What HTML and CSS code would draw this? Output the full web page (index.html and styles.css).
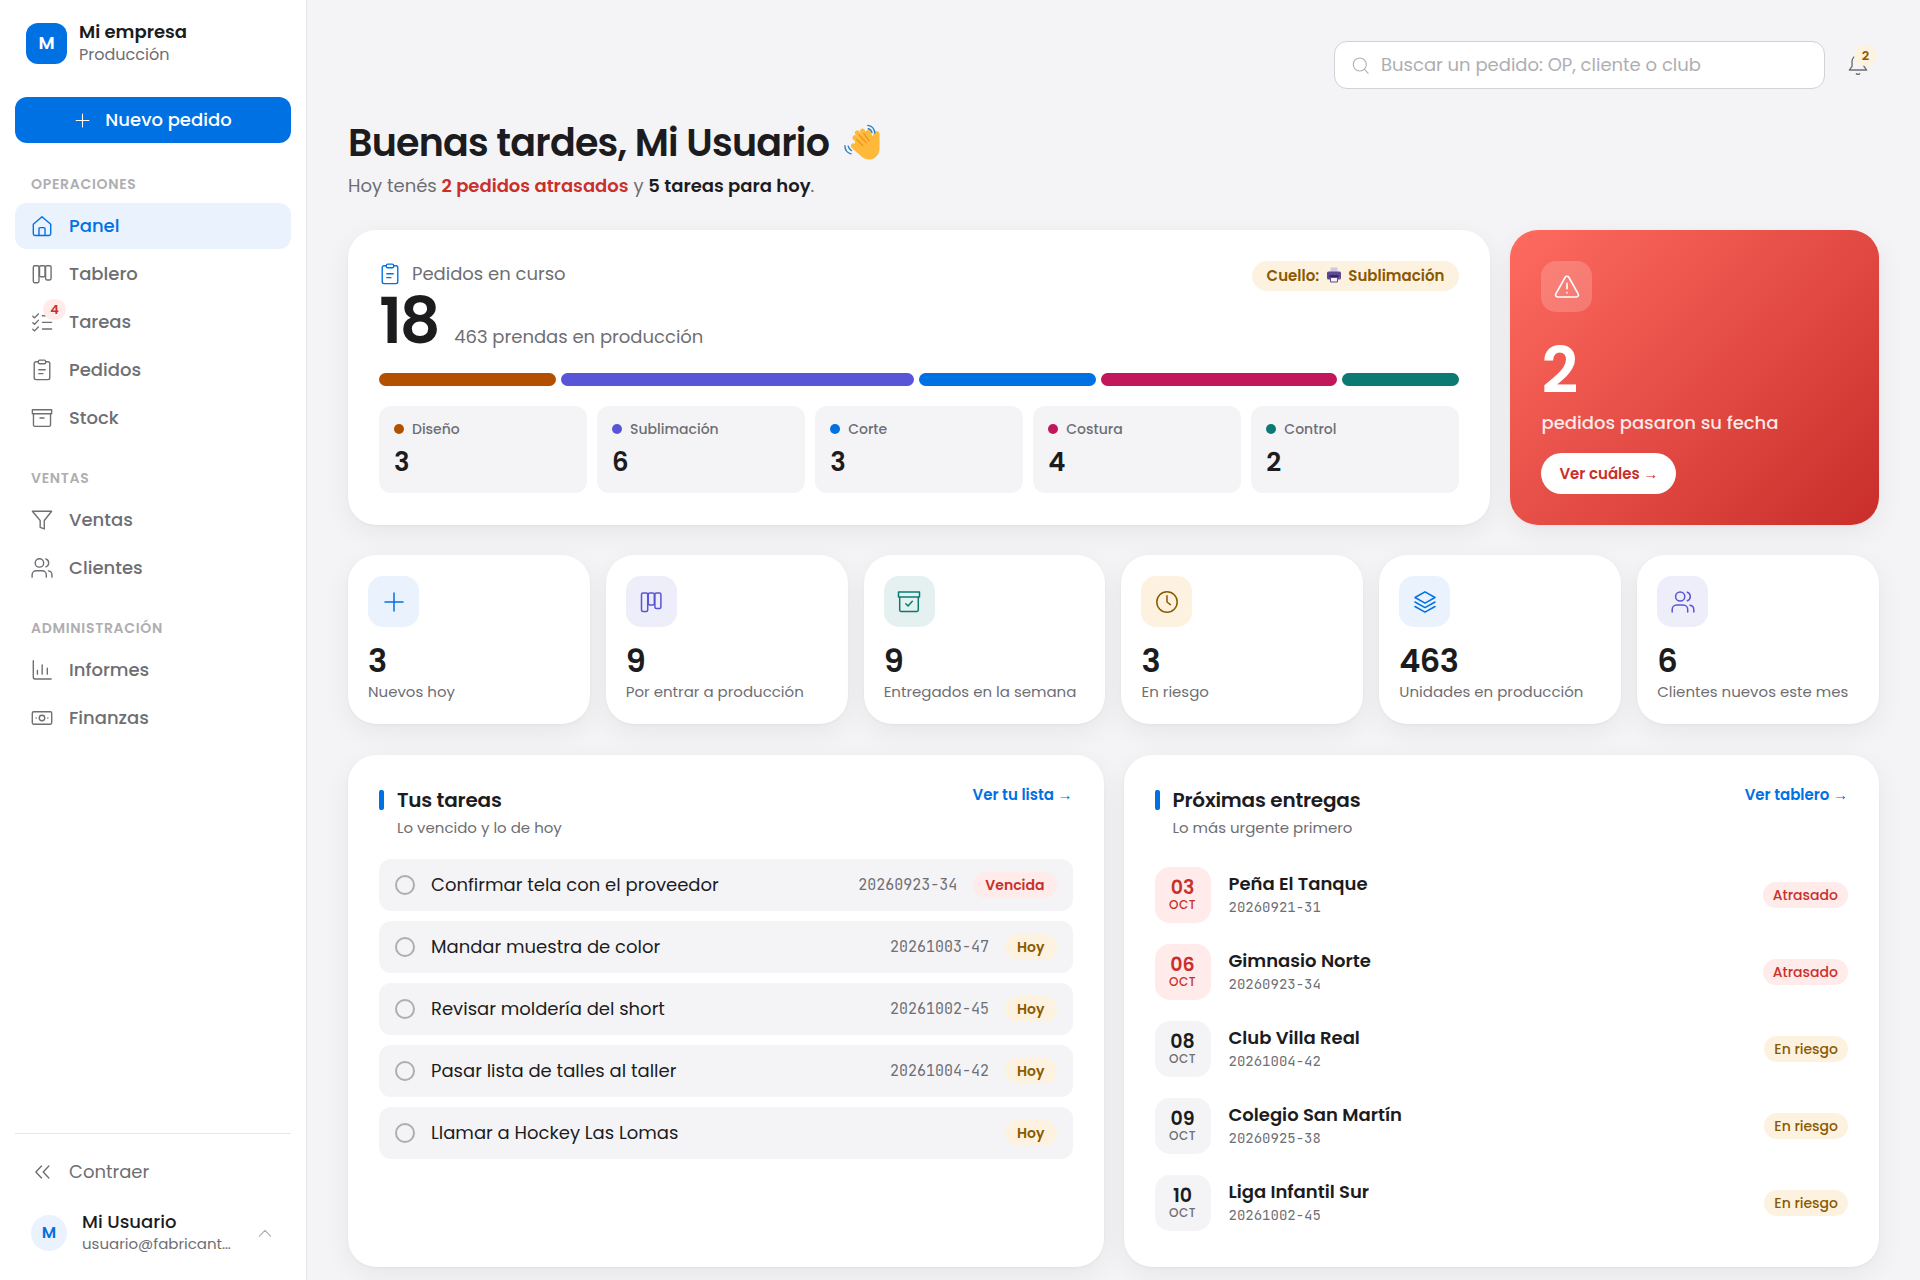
FILE: index.html
```html
<!DOCTYPE html>
<html lang="es">
<head>
<meta charset="utf-8">
<meta name="viewport" content="width=device-width, initial-scale=1">
<title>Panel · Mi empresa</title>
<link rel="stylesheet" href="styles.css">
</head>
<body>
<svg class="sprite" aria-hidden="true">
  <symbol id="i-home" viewBox="0 0 24 24"><path d="M2.500 10.200 12 1.800l9.500 8.400v10.300a1.800 1.800 0 0 1-1.800 1.800H4.300a1.800 1.800 0 0 1-1.800-1.800zM8.700 22.300v-7.300a1.200 1.200 0 0 1 1.200-1.200h4.200a1.200 1.200 0 0 1 1.200 1.200v7.300"/></symbol>
  <symbol id="i-board" viewBox="0 0 24 24"><rect x="2.500" y="3" width="6.200" height="18.500" rx="1.500"/><rect x="9.300" y="3" width="6" height="12" rx="1.500"/><rect x="15.900" y="3" width="6" height="15.500" rx="1.500"/></symbol>
  <symbol id="i-checks" viewBox="0 0 24 24"><path d="M2 5.800 3.900 7.500 8 3.200M2 12.800l1.900 1.700L8 10.200M2 20l1.900 1.700L8 17.400M12.500 5.200h10M12.500 12.400h10M12.500 19.600h10"/></symbol>
  <symbol id="i-clip" viewBox="0 0 24 24"><path d="M8 3H5.500a2 2 0 0 0-2 2v15.500a2 2 0 0 0 2 2h13a2 2 0 0 0 2-2V5a2 2 0 0 0-2-2H16M8.500 11.700h7M8.500 16h4.500"/><rect x="8" y="1.200" width="8" height="4" rx="1.500"/></symbol>
  <symbol id="i-archive" viewBox="0 0 24 24"><path d="M1.500 3h21v4.300h-21zM2.700 7.300V19.500a1.600 1.600 0 0 0 1.600 1.600h15.400a1.600 1.600 0 0 0 1.600-1.600V7.300M9.800 12h4.400"/></symbol>
  <symbol id="i-archive-ok" viewBox="0 0 24 24"><path d="M1.500 2h21v5h-21zM2.700 7V19.900a1.600 1.600 0 0 0 1.600 1.600h15.400a1.600 1.600 0 0 0 1.600-1.600V7M8.800 13.800l2.200 2.200 4.300-4.800"/></symbol>
  <symbol id="i-funnel" viewBox="0 0 24 24"><path d="M1.500 2.500h21L14.500 12.500v9.300L10 20v-7.500z"/></symbol>
  <symbol id="i-users" viewBox="0 0 24 24"><circle cx="9.200" cy="6.500" r="4.600"/><path d="M1.200 22v-2.500a4.500 4.500 0 0 1 4.500-4.500h6.500a4.500 4.500 0 0 1 4.500 4.500V22M16.300 2.200a4.600 4.600 0 0 1 0 8.600M19 15.200a4.500 4.500 0 0 1 3.800 4.500V22"/></symbol>
  <symbol id="i-chart" viewBox="0 0 24 24"><path d="M2.500 1.800v18a2 2 0 0 0 2 2h17.500M7 12.500v4M12.200 6.500v10M17.800 10v6.500"/></symbol>
  <symbol id="i-cash" viewBox="0 0 24 24"><rect x="1.400" y="5.200" width="21.200" height="13.600" rx="1.600"/><circle cx="12" cy="12" r="3"/><path d="M5.600 12h.1M18.300 12h.1"/></symbol>
  <symbol id="i-plus" viewBox="0 0 24 24"><path d="M12 3v18M3 12h18"/></symbol>
  <symbol id="i-collapse" viewBox="0 0 24 24"><path d="M11.500 5.500 5.300 12l6.200 6.500M19.500 5.500 13.300 12l6.200 6.500"/></symbol>
  <symbol id="i-up" viewBox="0 0 24 24"><path d="M2.500 17.500 12 7.500l9.500 10"/></symbol>
  <symbol id="i-search" viewBox="0 0 24 24"><circle cx="11" cy="10.500" r="9.200"/><path d="m17.800 17.300 5 5.700"/></symbol>
  <symbol id="i-bell" viewBox="0 0 24 24"><path d="M12 1.500a6.500 6.500 0 0 0-6.500 6.500v5.500L2.500 17.500h19l-3-4V8A6.500 6.500 0 0 0 12 1.500zM10.200 21.500a2.500 2.500 0 0 0 3.600 0"/></symbol>
  <symbol id="i-alert" viewBox="0 0 24 24"><path d="M10.300 3 1.700 18.300A1.900 1.900 0 0 0 3.400 21.200h17.200a1.900 1.900 0 0 0 1.700-2.900L13.700 3a2 2 0 0 0-3.400 0zM12 8.500v5M12 17.200v.2"/></symbol>
  <symbol id="i-clock" viewBox="0 0 24 24"><circle cx="12" cy="12" r="10.200"/><path d="M12 5.800V12l3.400 2.600"/></symbol>
  <symbol id="i-layers" viewBox="0 0 24 24"><path d="m12 1.800 10 5.700-10 5.700L2 7.500zM2 12l10 5.700L22 12M2 16.500l10 5.700 10-5.700"/></symbol>
  <symbol id="i-wave" viewBox="0 0 40 40">
    <g fill="none" stroke="#ffb93a" stroke-linecap="round" stroke-width="5.200">
      <path d="M23 26 12.500 15.500"/><path d="M26 23 15 10.500"/><path d="M29 21 20.500 8.500"/><path d="M31 20 26.500 10"/>
    </g>
    <path fill="#ffb93a" d="M12.500 20 30.500 15.500c1.500-2.500 1.500-5 3-6.500 2.500-1.500 5 .5 5 3.500V27c0 6-5 11.500-11 11.500-4 0-7-2-9.500-4.500L9.500 26.500c-3-3 .5-6.500 3-4.500z"/>
    <path d="m14.500 17.500 6.500 6.500M17 12.800l7.500 8M22 11l5.500 8" fill="none" stroke="#e88b1a" stroke-linecap="round" stroke-width="1.100"/>
    <g fill="none" stroke="#2f84c6" stroke-linecap="round" stroke-width="1.500">
      <path d="M26 2.500c4 .5 7 3.500 7.500 8"/><path d="M26.500 6c2 .5 3.500 2 4 4"/><path d="M2 24c0 4 2.500 7.500 6.500 8.500"/><path d="M5.500 24.500c.5 2 1.500 3.500 3.500 4.500"/>
    </g>
  </symbol>
  <symbol id="i-printer" viewBox="0 0 16 16">
    <path fill="#cfc6e8" d="M4.500.5h7v5h-7z"/>
    <rect x="1" y="4.500" width="14" height="8" rx="1.500" fill="#5b4a93"/>
    <path fill="#33275e" d="M3.500 8h9v3h-9z"/>
    <path fill="#f3effc" stroke="#5b4a93" d="M4.500 10.500h7v4.500h-7z"/>
    <circle cx="13.500" cy="11" r=".8" fill="#e0467c"/>
  </symbol>
</svg>

<div class="app">
  <aside class="sidebar">
    <div class="brand">
      <span class="brand-logo">M</span>
      <div class="brand-text"><strong>Mi empresa</strong><span>Producción</span></div>
    </div>
    <button class="new-order" type="button"><svg class="icon icon-sm"><use href="#i-plus"/></svg>Nuevo pedido</button>
    <nav class="nav">
      <section>
        <h2>Operaciones</h2>
        <ul>
          <li><a class="nav-item active" href="#panel" aria-current="page"><svg class="icon"><use href="#i-home"/></svg>Panel</a></li>
          <li><a class="nav-item" href="#tablero"><svg class="icon"><use href="#i-board"/></svg>Tablero</a></li>
          <li><a class="nav-item" href="#tareas"><span class="icon-wrap"><svg class="icon"><use href="#i-checks"/></svg><span class="count count-red">4</span></span>Tareas</a></li>
          <li><a class="nav-item" href="#pedidos"><svg class="icon"><use href="#i-clip"/></svg>Pedidos</a></li>
          <li><a class="nav-item" href="#stock"><svg class="icon"><use href="#i-archive"/></svg>Stock</a></li>
        </ul>
      </section>
      <section>
        <h2>Ventas</h2>
        <ul>
          <li><a class="nav-item" href="#ventas"><svg class="icon"><use href="#i-funnel"/></svg>Ventas</a></li>
          <li><a class="nav-item" href="#clientes"><svg class="icon"><use href="#i-users"/></svg>Clientes</a></li>
        </ul>
      </section>
      <section>
        <h2>Administración</h2>
        <ul>
          <li><a class="nav-item" href="#informes"><svg class="icon"><use href="#i-chart"/></svg>Informes</a></li>
          <li><a class="nav-item" href="#finanzas"><svg class="icon"><use href="#i-cash"/></svg>Finanzas</a></li>
        </ul>
      </section>
    </nav>
    <div class="sidebar-foot">
      <button class="nav-item collapse" type="button"><svg class="icon"><use href="#i-collapse"/></svg>Contraer</button>
      <button class="user" type="button">
        <span class="avatar">M</span>
        <span class="user-text"><span class="user-name">Mi Usuario</span><span class="user-mail">usuario@fabricant…</span></span>
        <svg class="icon icon-xs"><use href="#i-up"/></svg>
      </button>
    </div>
  </aside>

  <main class="main">
    <div class="topbar">
      <label class="search">
        <svg class="icon icon-sm"><use href="#i-search"/></svg>
        <input type="search" placeholder="Buscar un pedido: OP, cliente o club" aria-label="Buscar un pedido">
      </label>
      <button class="bell" type="button" aria-label="Notificaciones"><svg class="icon"><use href="#i-bell"/></svg><span class="count count-amber">2</span></button>
    </div>

    <header class="greeting">
      <h1>Buenas tardes, Mi Usuario <svg class="wave" role="img" aria-label="Saludo"><use href="#i-wave"/></svg></h1>
      <p>Hoy tenés <strong class="late">2 pedidos atrasados</strong> y <strong>5 tareas para hoy</strong>.</p>
    </header>

    <div class="hero-row">
      <section class="card hero">
        <div class="hero-head">
          <div>
            <h2><svg class="icon"><use href="#i-clip"/></svg>Pedidos en curso</h2>
            <p class="hero-total"><strong>18</strong><span>463 prendas en producción</span></p>
          </div>
          <span class="tag">Cuello: <svg class="printer" aria-hidden="true"><use href="#i-printer"/></svg> Sublimación</span>
        </div>
        <div class="bar">
          <span class="c-brown" style="flex-grow:3"></span>
          <span class="c-violet" style="flex-grow:6"></span>
          <span class="c-blue" style="flex-grow:3"></span>
          <span class="c-pink" style="flex-grow:4"></span>
          <span class="c-teal" style="flex-grow:2"></span>
        </div>
        <ul class="stages">
          <li><span class="stage-name"><i class="dot c-brown"></i>Diseño</span><strong>3</strong></li>
          <li><span class="stage-name"><i class="dot c-violet"></i>Sublimación</span><strong>6</strong></li>
          <li><span class="stage-name"><i class="dot c-blue"></i>Corte</span><strong>3</strong></li>
          <li><span class="stage-name"><i class="dot c-pink"></i>Costura</span><strong>4</strong></li>
          <li><span class="stage-name"><i class="dot c-teal"></i>Control</span><strong>2</strong></li>
        </ul>
      </section>
      <section class="card alert">
        <span class="tile tile-glass"><svg class="icon icon-lg"><use href="#i-alert"/></svg></span>
        <strong class="alert-num">2</strong>
        <p>pedidos pasaron su fecha</p>
        <button type="button">Ver cuáles →</button>
      </section>
    </div>

    <ul class="stats">
      <li class="card stat"><span class="tile tile-blue"><svg class="icon icon-md"><use href="#i-plus"/></svg></span><strong>3</strong><span>Nuevos hoy</span></li>
      <li class="card stat"><span class="tile tile-violet"><svg class="icon icon-md"><use href="#i-board"/></svg></span><strong>9</strong><span>Por entrar a producción</span></li>
      <li class="card stat"><span class="tile tile-teal"><svg class="icon icon-md"><use href="#i-archive-ok"/></svg></span><strong>9</strong><span>Entregados en la semana</span></li>
      <li class="card stat"><span class="tile tile-amber"><svg class="icon icon-md"><use href="#i-clock"/></svg></span><strong>3</strong><span>En riesgo</span></li>
      <li class="card stat"><span class="tile tile-blue"><svg class="icon icon-md"><use href="#i-layers"/></svg></span><strong>463</strong><span>Unidades en producción</span></li>
      <li class="card stat"><span class="tile tile-violet"><svg class="icon icon-md"><use href="#i-users"/></svg></span><strong>6</strong><span>Clientes nuevos este mes</span></li>
    </ul>

    <div class="panels">
      <section class="card panel">
        <header class="panel-head">
          <div><h2>Tus tareas</h2><p>Lo vencido y lo de hoy</p></div>
          <a href="#tareas">Ver tu lista →</a>
        </header>
        <ul class="tasks">
          <li><input id="t1" type="checkbox"><label for="t1">Confirmar tela con el proveedor</label><code>20260923-34</code><span class="pill pill-red">Vencida</span></li>
          <li><input id="t2" type="checkbox"><label for="t2">Mandar muestra de color</label><code>20261003-47</code><span class="pill pill-amber">Hoy</span></li>
          <li><input id="t3" type="checkbox"><label for="t3">Revisar moldería del short</label><code>20261002-45</code><span class="pill pill-amber">Hoy</span></li>
          <li><input id="t4" type="checkbox"><label for="t4">Pasar lista de talles al taller</label><code>20261004-42</code><span class="pill pill-amber">Hoy</span></li>
          <li><input id="t5" type="checkbox"><label for="t5">Llamar a Hockey Las Lomas</label><span class="pill pill-amber">Hoy</span></li>
        </ul>
      </section>
      <section class="card panel">
        <header class="panel-head">
          <div><h2>Próximas entregas</h2><p>Lo más urgente primero</p></div>
          <a href="#tablero">Ver tablero →</a>
        </header>
        <ul class="deliveries">
          <li><time class="date date-late" datetime="2026-10-03"><b>03</b><small>OCT</small></time><div class="club"><strong>Peña El Tanque</strong><code>20260921-31</code></div><span class="pill pill-soft pill-red">Atrasado</span></li>
          <li><time class="date date-late" datetime="2026-10-06"><b>06</b><small>OCT</small></time><div class="club"><strong>Gimnasio Norte</strong><code>20260923-34</code></div><span class="pill pill-soft pill-red">Atrasado</span></li>
          <li><time class="date" datetime="2026-10-08"><b>08</b><small>OCT</small></time><div class="club"><strong>Club Villa Real</strong><code>20261004-42</code></div><span class="pill pill-soft pill-amber">En riesgo</span></li>
          <li><time class="date" datetime="2026-10-09"><b>09</b><small>OCT</small></time><div class="club"><strong>Colegio San Martín</strong><code>20260925-38</code></div><span class="pill pill-soft pill-amber">En riesgo</span></li>
          <li><time class="date" datetime="2026-10-10"><b>10</b><small>OCT</small></time><div class="club"><strong>Liga Infantil Sur</strong><code>20261002-45</code></div><span class="pill pill-soft pill-amber">En riesgo</span></li>
        </ul>
      </section>
    </div>
  </main>
</div>
</body>
</html>
```

FILE: styles.css
```css
:root {
  --ink: #1c1c1e;
  --muted: #6e6e73;
  --faint: #aeaeb2;
  --line: #e5e5ea;
  --ground: #f4f4f7;
  --blue: #0071e3;
  --blue-soft: #eaf2fe;
  --violet: #5856d6;
  --violet-soft: #eeedfa;
  --teal: #0b7a72;
  --teal-soft: #e5f1f0;
  --amber: #8a5a00;
  --amber-soft: #fdf2e0;
  --red: #c9302c;
  --red-soft: #feebea;
  --brown: #b25000;
  --pink: #c2185b;
}

* { box-sizing: border-box; }

body {
  margin: 0;
  background: var(--ground);
  color: var(--ink);
  font: 400 17px/26px Poppins, "Liberation Sans", sans-serif;
}

h1, h2, p, ul { margin: 0; padding: 0; }
ul { list-style: none; }
a { color: inherit; text-decoration: none; }
button, input { font: inherit; color: inherit; }
button { border: 0; background: none; padding: 0; cursor: pointer; }
strong, b { font-weight: 600; }
code { font-family: "JetBrains Mono", "DejaVu Sans Mono", monospace; color: var(--muted); }

.sprite { position: absolute; width: 0; height: 0; }
.icon {
  flex: none;
  width: 22px;
  height: 22px;
  fill: none;
  stroke: currentColor;
  stroke-width: 1.5;
  stroke-linecap: round;
  stroke-linejoin: round;
}
.icon-lg { width: 26px; height: 26px; }
.icon-md { width: 24px; height: 24px; }
.icon-sm { width: 17px; height: 17px; }
.icon-xs { width: 14px; height: 14px; color: var(--faint); stroke-width: 2; }

.app { display: flex; align-items: flex-start; }

/* Sidebar */
.sidebar {
  position: sticky;
  top: 0;
  flex: none;
  display: flex;
  flex-direction: column;
  width: 307px;
  height: 100vh;
  padding: 20px 15px 17px;
  background: #fff;
  border-right: 1px solid var(--line);
}
.brand { display: flex; align-items: center; gap: 12px; padding: 0 11px; }
.brand-logo {
  display: grid;
  place-items: center;
  width: 41px;
  height: 41px;
  border-radius: 12px;
  background: var(--blue);
  color: #fff;
  font-weight: 600;
  font-size: 18px;
}
.brand-text { display: flex; flex-direction: column; line-height: 23px; }
.brand-text strong { font-size: 18px; }
.brand-text span { font-size: 16px; color: var(--muted); }

.new-order {
  display: flex;
  align-items: center;
  justify-content: center;
  gap: 14px;
  height: 46px;
  margin-top: 31px;
  border-radius: 12px;
  background: var(--blue);
  color: #fff;
  font-size: 18px;
  font-weight: 500;
}

.nav { display: flex; flex-direction: column; gap: 27px; margin-top: 31px; }
.nav h2 {
  padding: 0 16px 9px;
  font-size: 14px;
  line-height: 20px;
  font-weight: 600;
  letter-spacing: 0.05em;
  text-transform: uppercase;
  color: var(--faint);
}
.nav ul { display: flex; flex-direction: column; gap: 2px; }
.nav-item {
  display: flex;
  align-items: center;
  gap: 16px;
  width: 100%;
  height: 46px;
  padding: 0 16px;
  border-radius: 12px;
  color: var(--muted);
  font-size: 18px;
  font-weight: 500;
}
.nav-item.active { background: var(--blue-soft); color: var(--blue); }
.icon-wrap { position: relative; display: flex; }
.count {
  position: absolute;
  display: grid;
  place-items: center;
  min-width: 23px;
  height: 21px;
  border-radius: 11px;
  font-size: 13px;
  line-height: 21px;
  font-weight: 600;
}
.count-red { top: -12px; left: 12px; background: var(--red-soft); color: var(--red); }
.count-amber { top: 4px; right: 2px; background: var(--amber-soft); color: var(--amber); }

.sidebar-foot {
  display: flex;
  flex-direction: column;
  gap: 8px;
  margin-top: auto;
  padding-top: 15px;
  border-top: 1px solid var(--line);
}
.collapse { font-weight: 400; }
.user { display: flex; align-items: center; gap: 15px; padding: 8px 19px 8px 16px; text-align: left; }
.avatar {
  display: grid;
  place-items: center;
  flex: none;
  width: 36px;
  height: 36px;
  border-radius: 50%;
  background: var(--blue-soft);
  color: var(--blue);
  font-size: 16px;
  font-weight: 600;
}
.user-text { flex: 1; min-width: 0; display: flex; flex-direction: column; line-height: 22px; }
.user-name { font-size: 18px; font-weight: 500; }
.user-mail { font-size: 15px; color: var(--muted); white-space: nowrap; }

/* Main column */
.main { flex: 1; min-width: 0; padding: 41px 41px 16px; }

.topbar { display: flex; justify-content: flex-end; gap: 11px; }
.search {
  display: flex;
  align-items: center;
  gap: 12px;
  width: 491px;
  height: 48px;
  padding: 0 17px;
  border: 1px solid #d1d1d6;
  border-radius: 13px;
  background: #fff;
  color: var(--faint);
}
.search input {
  flex: 1;
  min-width: 0;
  border: 0;
  outline: 0;
  padding: 0;
  background: none;
  font-size: 18px;
  color: var(--ink);
}
.search input::placeholder { color: var(--faint); opacity: 1; }
.bell { position: relative; display: grid; place-items: center; width: 43px; height: 48px; color: var(--muted); }

.greeting { margin-top: 30px; }
.greeting h1 { font-size: 38px; line-height: 48px; font-weight: 600; letter-spacing: -0.02em; }
.wave { width: 38px; height: 40px; margin-left: 6px; vertical-align: -6px; }
.greeting p { margin-top: 5px; font-size: 18px; line-height: 28px; color: var(--muted); }
.greeting p strong { color: var(--ink); }
.greeting p .late { color: var(--red); }

.card {
  border-radius: 28px;
  background: #fff;
  box-shadow: 0 1px 3px rgba(0, 0, 0, 0.04), 0 8px 28px rgba(0, 0, 0, 0.06);
}

.hero-row { display: grid; grid-template-columns: 31fr 10fr; gap: 20px; margin-top: 30px; }
.hero { padding: 31px; }
.hero-head { display: flex; justify-content: space-between; align-items: flex-start; }
.hero h2 { display: flex; align-items: center; gap: 11px; font-size: 18px; line-height: 26px; font-weight: 400; color: var(--muted); }
.hero h2 .icon { color: var(--blue); }
.hero-total { display: flex; align-items: baseline; gap: 16px; color: var(--muted); font-size: 18px; }
.hero-total strong { font-size: 64px; line-height: 68px; letter-spacing: -0.04em; color: var(--ink); }
.tag {
  padding: 0 15px;
  border-radius: 15px;
  background: var(--amber-soft);
  color: var(--amber);
  font-size: 15px;
  line-height: 30px;
  font-weight: 600;
}
.printer { width: 16px; height: 16px; margin: 0 3px; vertical-align: -2px; }
.bar { display: flex; gap: 5px; height: 13px; margin-top: 18px; }
.bar span { flex: 0 1 0; border-radius: 7px; }
.c-brown { background: var(--brown); }
.c-violet { background: var(--violet); }
.c-blue { background: var(--blue); }
.c-pink { background: var(--pink); }
.c-teal { background: var(--teal); }
.stages { display: grid; grid-template-columns: repeat(5, 1fr); gap: 10px; margin-top: 20px; }
.stages li { padding: 12px 15px 15px; border-radius: 12px; background: var(--ground); }
.stage-name { display: flex; align-items: center; gap: 8px; font-size: 14px; line-height: 22px; font-weight: 500; color: var(--muted); }
.dot { width: 10px; height: 10px; border-radius: 50%; }
.stages strong { display: block; margin-top: 6px; font-size: 26px; line-height: 32px; }

.alert {
  display: flex;
  flex-direction: column;
  align-items: flex-start;
  padding: 31px;
  background: linear-gradient(135deg, #ff6b60, #c92e2a);
  color: #fff;
}
.tile { display: grid; place-items: center; width: 51px; height: 51px; border-radius: 15px; }
.tile-glass { background: rgba(255, 255, 255, 0.18); }
.tile-blue { background: var(--blue-soft); color: var(--blue); }
.tile-violet { background: var(--violet-soft); color: var(--violet); }
.tile-teal { background: var(--teal-soft); color: var(--teal); }
.tile-amber { background: var(--amber-soft); color: var(--amber); }
.alert-num { margin-top: 27px; font-size: 64px; line-height: 64px; font-weight: 600; }
.alert p { margin-top: 7px; font-size: 18px; font-weight: 500; color: rgba(255, 255, 255, 0.88); }
.alert button {
  margin-top: 17px;
  height: 41px;
  padding: 0 18px;
  border-radius: 21px;
  background: #fff;
  color: var(--red);
  font-size: 15px;
  font-weight: 600;
}

.stats { display: grid; grid-template-columns: repeat(6, minmax(0, 1fr)); gap: 16px; margin-top: 30px; }
.stat { display: flex; flex-direction: column; padding: 21px 20px; }
.stat strong { margin-top: 18px; font-size: 32px; line-height: 32px; letter-spacing: -0.02em; }
.stat > span:last-child { margin-top: 4px; font-size: 15px; line-height: 22px; color: var(--muted); white-space: nowrap; }

.panels { display: grid; grid-template-columns: 1fr 1fr; gap: 20px; margin-top: 31px; }
.panel { padding: 31px 31px 28px; }
.panel-head { display: flex; justify-content: space-between; align-items: flex-start; }
.panel-head h2 { display: flex; align-items: center; gap: 13px; font-size: 20px; line-height: 28px; font-weight: 600; letter-spacing: -0.01em; }
.panel-head h2::before { content: ""; width: 5px; height: 20px; border-radius: 2px; background: var(--blue); }
.panel-head > div { display: flex; flex-direction: column; padding-bottom: 17px; }
.panel-head p { padding-left: 18px; font-size: 15px; line-height: 28px; color: var(--muted); }
.panel-head a { line-height: 18px; font-size: 15px; font-weight: 600; color: var(--blue); }

.tasks { display: flex; flex-direction: column; gap: 10px; }
.tasks li { display: flex; align-items: center; gap: 16px; height: 52px; padding: 0 16px; border-radius: 12px; background: var(--ground); }
.tasks label { flex: 1; font-size: 18px; }
.tasks input { appearance: none; flex: none; width: 20px; height: 20px; margin: 0; border: 2px solid var(--faint); border-radius: 50%; }
.tasks code { font-size: 15px; }
.pill { padding: 0 12px; border-radius: 13px; font-size: 14px; line-height: 26px; font-weight: 600; }
.pill-soft { padding: 0 10px; font-weight: 500; }
.pill-red { background: var(--red-soft); color: var(--red); }
.pill-amber { background: var(--amber-soft); color: var(--amber); }

.deliveries { display: flex; flex-direction: column; gap: 5px; }
.deliveries li { display: flex; align-items: center; gap: 18px; padding: 8px 0; }
.date {
  display: flex;
  flex-direction: column;
  align-items: center;
  justify-content: center;
  width: 56px;
  height: 56px;
  border-radius: 15px;
  background: var(--ground);
}
.date b { font-size: 19px; line-height: 20px; }
.date small { font-size: 12px; line-height: 14px; font-weight: 500; letter-spacing: 0.04em; color: var(--muted); }
.date-late { background: var(--red-soft); color: var(--red); }
.date-late small { color: inherit; }
.club { flex: 1; display: flex; flex-direction: column; }
.club strong { font-size: 18px; line-height: 24px; }
.club code { font-size: 14px; line-height: 22px; }
```
